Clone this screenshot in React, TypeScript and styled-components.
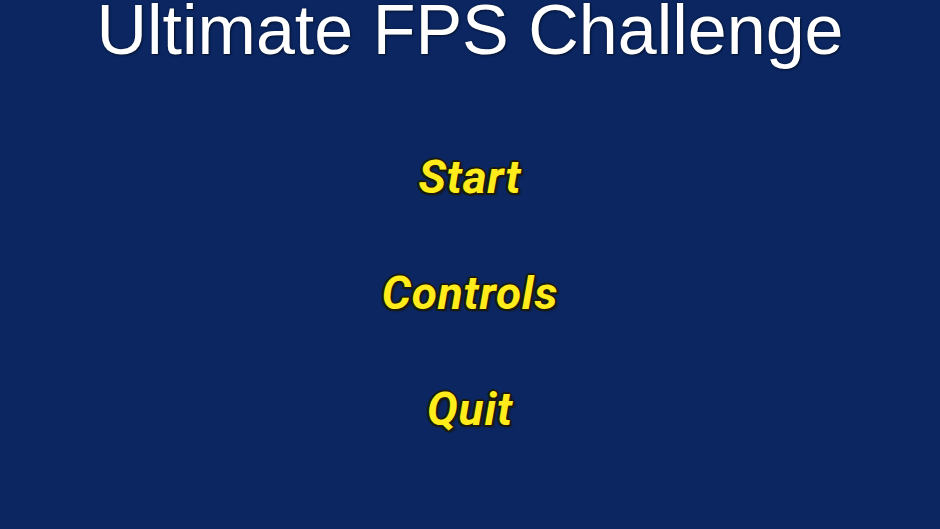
import React from "react";
import styled, { createGlobalStyle } from "styled-components";

const Global = createGlobalStyle`
  html, body { margin: 0; padding: 0; background: #0b2660; }
  #root { width: 940px; height: 529px; }
`;

const Screen = styled.div`
  width: 940px;
  height: 529px;
  background: #0b2660;
  display: flex;
  flex-direction: column;
  align-items: center;
  overflow: hidden;
`;

const Title = styled.h1`
  margin: 0;
  font-family: "Liberation Sans", Arial, sans-serif;
  font-weight: 400;
  font-size: 70px;
  line-height: 61px;
  height: 61px;
  color: #ffffff;
  text-shadow: 0 0 2px #0a1a3a, 1px 1px 2px #061230;
  white-space: nowrap;
`;

const Menu = styled.nav`
  display: flex;
  flex-direction: column;
  align-items: center;
  gap: 63px;
  margin-top: 90px;
`;

const MenuItem = styled.div`
  font-family: Roboto, "Noto Sans", sans-serif;
  font-weight: 700;
  font-style: italic;
  font-size: 46px;
  letter-spacing: 0.8px;
  line-height: 53px;
  color: #ffec1a;
  text-shadow:
    -1.5px -1.5px 0 #1a1a10, 1.5px -1.5px 0 #1a1a10, -1.5px 1.5px 0 #1a1a10, 1.5px 1.5px 0 #1a1a10,
    0 -2px 0 #1a1a10, 0 2px 0 #1a1a10, -2px 0 0 #1a1a10, 2px 0 0 #1a1a10,
    2px 2px 2px #151510;
  cursor: pointer;
`;

export default function App() {
  return (
    <>
      <Global />
      <Screen>
        <Title>Ultimate FPS Challenge</Title>
        <Menu>
          <MenuItem>Start</MenuItem>
          <MenuItem>Controls</MenuItem>
          <MenuItem>Quit</MenuItem>
        </Menu>
      </Screen>
    </>
  );
}
